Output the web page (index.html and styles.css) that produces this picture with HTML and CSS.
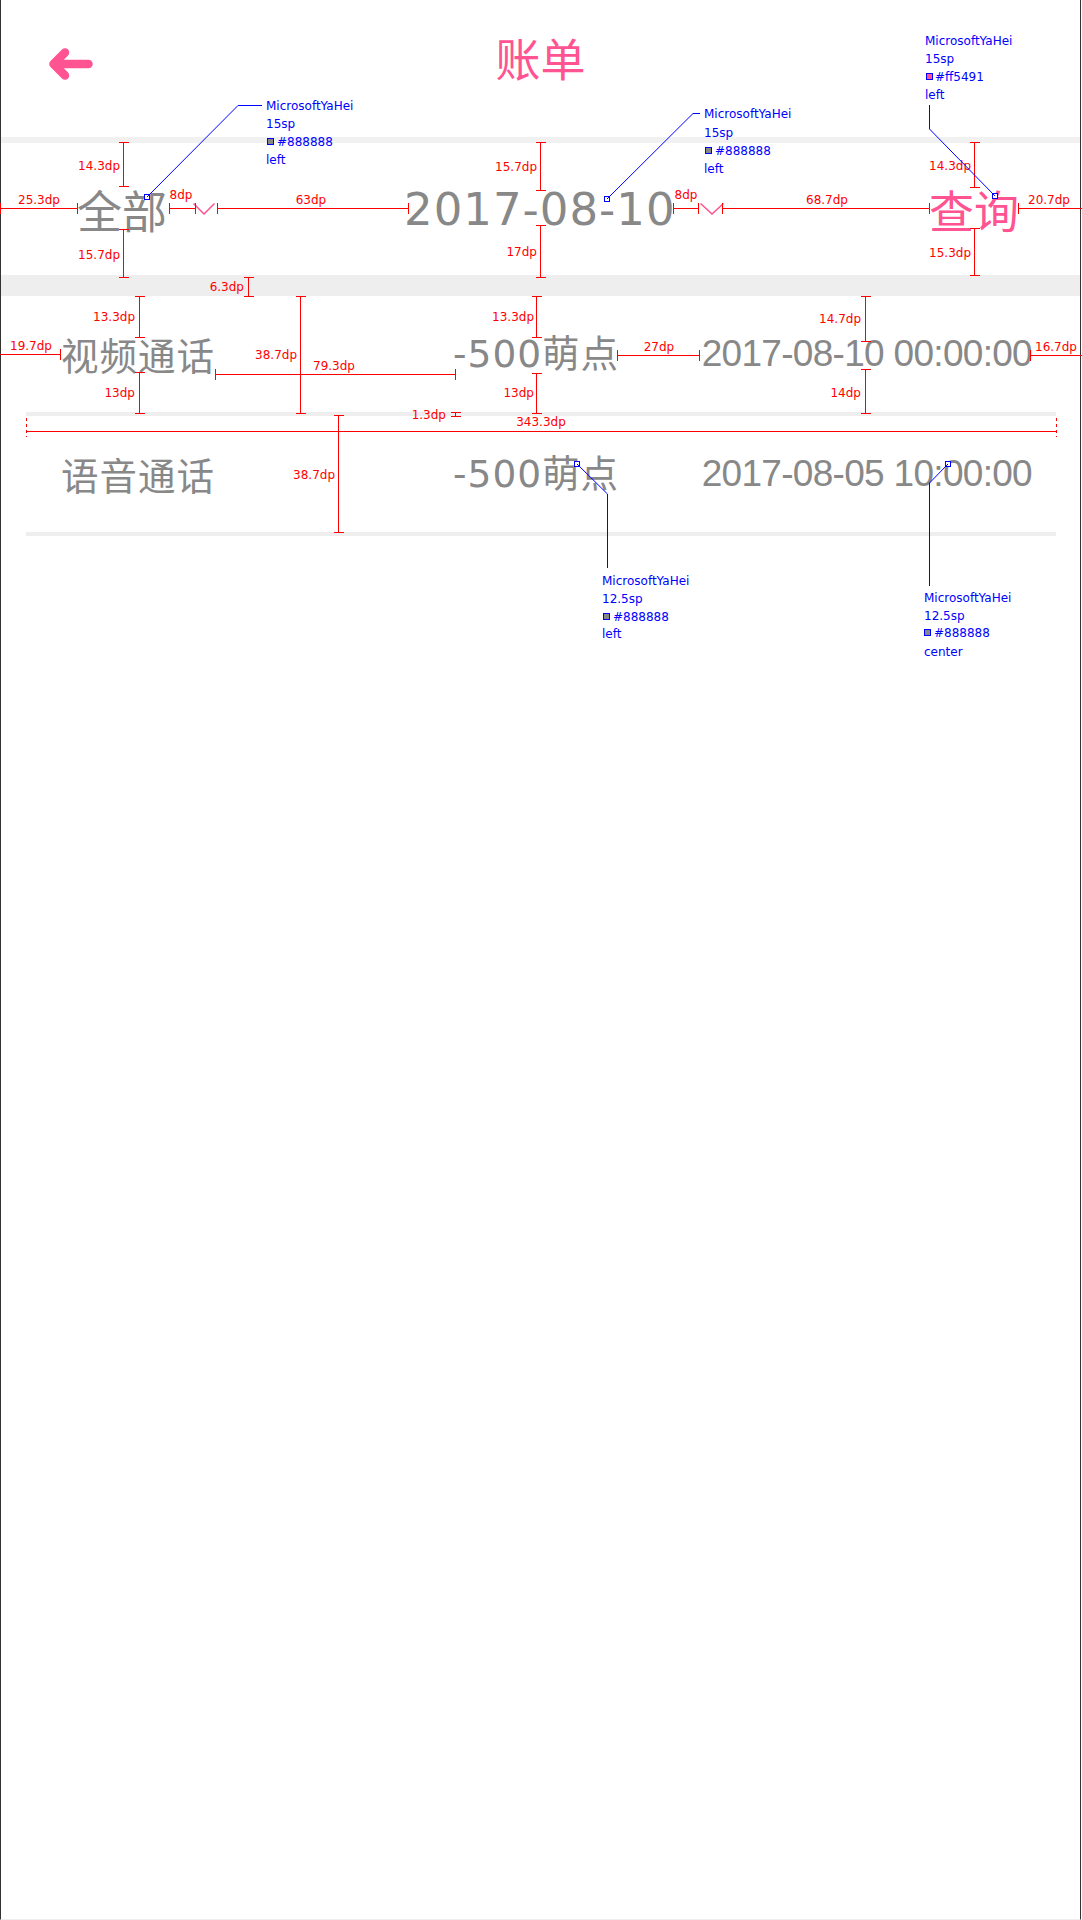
FILE: index.html
```html
<!DOCTYPE html>
<html lang="zh-CN">
<head>
<meta charset="utf-8">
<title>账单</title>
<link rel="stylesheet" href="styles.css">
</head>
<body>
<div class="page">
  <header class="topbar">
    <a class="back" href="#" aria-label="返回">
      <svg class="back-icon" width="44" height="33" viewBox="0 0 44 33"><path d="M39.5 16H5M16 4.5L4.5 16L16 27.5"/></svg>
    </a>
    <h1 class="title">账单</h1>
    <span class="spacer"></span>
  </header>
  <div class="strip"></div>
  <div class="filter">
    <span class="sel">全部</span>
    <svg class="caret caret-a" width="22" height="12" viewBox="0 0 22 12"><path d="M0.5 0.5L11 11L21.5 0.5"/></svg>
    <span class="sel sel-date">2017-08-10</span>
    <svg class="caret caret-b" width="24" height="12" viewBox="0 0 24 12"><path d="M0.5 0.5L12 11L23.5 0.5"/></svg>
    <span class="query">查询</span>
  </div>
  <div class="band"></div>
  <ul class="list">
    <li class="item"><span class="type">视频通话</span><span class="amt">-500萌点</span><span class="time">2017-08-10 00:00:00</span></li>
    <li class="divider"></li>
    <li class="item"><span class="type">语音通话</span><span class="amt">-500萌点</span><span class="time">2017-08-05 10:00:00</span></li>
    <li class="divider"></li>
  </ul>

  <svg class="notes" width="1082" height="1920" viewBox="0 0 1082 1920">
    <g class="dim">
      <path d="M123.5 142.5V186.5M118.5 142.5H128.5M118.5 186.5H128.5"/>
      <path d="M123.5 229.5V277.5M118.5 229.5H128.5M118.5 277.5H128.5"/>
      <path d="M248.5 277.5V296.5M243.5 277.5H253.5M243.5 296.5H253.5"/>
      <path d="M540.5 142.5V190.5M535.5 142.5H545.5M535.5 190.5H545.5"/>
      <path d="M540.5 225.5V277.5M535.5 225.5H545.5M535.5 277.5H545.5"/>
      <path d="M974.5 142.5V187.5M969.5 142.5H979.5M969.5 187.5H979.5"/>
      <path d="M974.5 228.5V275.5M969.5 228.5H979.5M969.5 275.5H979.5"/>
      <path d="M139.5 296.5V337.5M134.5 296.5H144.5M134.5 337.5H144.5"/>
      <path d="M139.5 372.5V413.5M134.5 372.5H144.5M134.5 413.5H144.5"/>
      <path d="M300.5 296.5V413.5M295.5 296.5H305.5M295.5 413.5H305.5"/>
      <path d="M536.5 296.5V337.5M531.5 296.5H541.5M531.5 337.5H541.5"/>
      <path d="M536.5 373.5V413.5M531.5 373.5H541.5M531.5 413.5H541.5"/>
      <path d="M865.5 296.5V341.5M860.5 296.5H870.5M860.5 341.5H870.5"/>
      <path d="M865.5 369.5V413.5M860.5 369.5H870.5M860.5 413.5H870.5"/>
      <path d="M455.5 412.5V416.5M450.5 412.5H460.5M450.5 416.5H460.5"/>
      <path d="M338.5 415.5V532.5M333.5 415.5H343.5M333.5 532.5H343.5"/>

      <path d="M0 208.5H77M0.5 203V214M77.5 203V214"/>
      <path d="M169.5 208.5H195M169.5 203V214M195.5 203V214"/>
      <path d="M217.5 208.5H408.5M217.5 203V214M408.5 203V214"/>
      <path d="M673.5 208.5H698M673.5 203V214M698.5 203V214"/>
      <path d="M722.5 208.5H929M722.5 203V214M929.5 203V214"/>
      <path d="M1018.5 208.5H1082M1018.5 203V214"/>
      <path d="M0 354.5H61M60.5 349V360"/>
      <path d="M215.5 374.5H455M215.5 369V380M455.5 369V380"/>
      <path d="M617.5 355.5H699M617.5 350V361M699.5 350V361"/>
      <path d="M1030.5 355.5H1082M1030.5 350V361"/>
      <path d="M26.5 431.5H1056"/>
      <path class="dash" d="M26.5 418V437M1056.5 418V437"/>
    </g>
    <g class="dl end">
      <text x="120" y="166">14.3dp</text>
      <text x="120" y="255">15.7dp</text>
      <text x="244" y="287">6.3dp</text>
      <text x="537" y="167">15.7dp</text>
      <text x="537" y="252">17dp</text>
      <text x="971" y="166">14.3dp</text>
      <text x="971" y="253">15.3dp</text>
      <text x="135" y="317">13.3dp</text>
      <text x="135" y="393">13dp</text>
      <text x="297" y="355">38.7dp</text>
      <text x="534" y="317">13.3dp</text>
      <text x="534" y="393">13dp</text>
      <text x="861" y="319">14.7dp</text>
      <text x="861" y="393">14dp</text>
      <text x="446" y="415">1.3dp</text>
      <text x="335" y="475">38.7dp</text>
    </g>
    <g class="dl mid">
      <text x="39" y="200">25.3dp</text>
      <text x="181" y="195">8dp</text>
      <text x="311" y="200">63dp</text>
      <text x="686" y="195">8dp</text>
      <text x="827" y="200">68.7dp</text>
      <text x="1049" y="200">20.7dp</text>
      <text x="31" y="346">19.7dp</text>
      <text x="334" y="366">79.3dp</text>
      <text x="659" y="347">27dp</text>
      <text x="1056" y="347">16.7dp</text>
      <text x="541" y="422">343.3dp</text>
    </g>

    <g class="co">
      <rect x="144.5" y="194.5" width="5" height="5"/>
      <polyline points="147,197 238,105.5 262,105.5"/>
      <rect x="604.5" y="196.5" width="5" height="5"/>
      <polyline points="607,199 693,113.5 700,113.5"/>
      <rect x="992.5" y="193.5" width="5" height="5"/>
      <polyline points="995,196 929.5,129 929.5,105"/>
      <rect x="574.5" y="461.5" width="5" height="5"/>
      <polyline points="577,464 607.5,494 607.5,568"/>
      <rect x="945.5" y="461.5" width="5" height="5"/>
      <polyline points="948,464 929.5,483 929.5,586"/>
    </g>
    <g class="sw">
      <rect class="sw-gray" x="267.5" y="138.5" width="6" height="6"/>
      <rect class="sw-gray" x="705.5" y="147.5" width="6" height="6"/>
      <rect class="sw-pink" x="926.5" y="73.5" width="6" height="6"/>
      <rect class="sw-gray" x="603.5" y="613.5" width="6" height="6"/>
      <rect class="sw-gray" x="924.5" y="629.5" width="6" height="6"/>
    </g>
    <g class="ct">
      <text x="266" y="106">MicrosoftYaHei</text>
      <text x="266" y="124">15sp</text>
      <text x="277" y="142">#888888</text>
      <text x="266" y="160">left</text>

      <text x="704" y="114">MicrosoftYaHei</text>
      <text x="704" y="132.5">15sp</text>
      <text x="715" y="151">#888888</text>
      <text x="704" y="169">left</text>

      <text x="925" y="41">MicrosoftYaHei</text>
      <text x="925" y="59">15sp</text>
      <text x="935" y="77">#ff5491</text>
      <text x="925" y="95">left</text>

      <text x="602" y="581">MicrosoftYaHei</text>
      <text x="602" y="599">12.5sp</text>
      <text x="613" y="617">#888888</text>
      <text x="602" y="634">left</text>

      <text x="924" y="598">MicrosoftYaHei</text>
      <text x="924" y="616">12.5sp</text>
      <text x="934" y="633">#888888</text>
      <text x="924" y="652">center</text>
    </g>
  </svg>
</div>
</body>
</html>
```
FILE: styles.css
```css
* {
  box-sizing: border-box;
  margin: 0;
  padding: 0;
}

html,
body {
  background: #ffffff;
}

body {
  width: 1082px;
  height: 1920px;
  overflow: hidden;
}

.page {
  position: relative;
  width: 1081px;
  height: 1920px;
  border-left: 1px solid #333333;
  border-right: 1px solid #333333;
  border-bottom: 1px solid #eeeeee;
  font-family: "Noto Sans CJK SC", "Noto Sans", sans-serif;
  color: #888888;
}

/* header */
.topbar {
  height: 137px;
  display: grid;
  grid-template-columns: 1fr auto 1fr;
  align-items: start;
}

.back {
  display: block;
  width: 44px;
  height: 33px;
  margin: 48px 0 0 48px;
}

.back-icon {
  display: block;
}

.back-icon path {
  fill: none;
  stroke: #ff5491;
  stroke-width: 8.5;
  stroke-linecap: round;
  stroke-linejoin: round;
}

.title {
  margin-top: 35px;
  font-size: 45px;
  line-height: 45px;
  font-weight: 400;
  color: #ff5491;
}

.strip {
  height: 6px;
  background: #f1f1f1;
}

/* filter row */
.filter {
  height: 132px;
  display: flex;
  align-items: center;
  padding: 0 61px 0 76px;
}

.sel {
  font-size: 45px;
  line-height: 45px;
  color: #888888;
}

.sel-date {
  margin-left: 189px;
  font-family: "DejaVu Sans", "Noto Sans CJK SC", sans-serif;
  letter-spacing: 1px;
}

.caret {
  display: block;
  flex: none;
}

.caret path {
  fill: none;
  stroke: #ff5491;
  stroke-width: 1.5;
}

.caret-a {
  margin-left: 26px;
}

.caret-b {
  margin-left: 24px;
}

.query {
  margin-left: auto;
  font-size: 45px;
  line-height: 45px;
  color: #ff5491;
}

.band {
  height: 21px;
  background: #eeeeee;
}

/* list */
.list {
  list-style: none;
}

.item {
  height: 116px;
  display: flex;
  align-items: center;
  padding: 0 48px 0 60px;
  font-size: 37.5px;
  line-height: 40px;
}

.type {
  letter-spacing: 1px;
}

.amt {
  margin-left: 238px;
  font-family: "DejaVu Sans", "Noto Sans CJK SC", sans-serif;
  letter-spacing: 1px;
}

.time {
  margin-left: auto;
  font-family: "Liberation Sans", "Noto Sans CJK SC", sans-serif;
  font-size: 37px;
  letter-spacing: -0.7px;
}

.divider {
  height: 4px;
  margin: 0 24px 0 25px;
  background: #eeeeee;
}

/* annotation layer */
.notes {
  position: absolute;
  top: 0;
  left: -1px;
  pointer-events: none;
}

.dim path {
  fill: none;
  stroke: #ff0000;
  stroke-width: 1;
  shape-rendering: crispEdges;
}

.dim .dash {
  stroke-dasharray: 3 3;
}

.notes text {
  font-family: "DejaVu Sans", sans-serif;
  font-size: 12px;
  dominant-baseline: central;
}

.dl text {
  fill: #ff0000;
}

.dl.end text {
  text-anchor: end;
}

.dl.mid text {
  text-anchor: middle;
}

.co rect,
.co polyline {
  fill: none;
  stroke: #0000ff;
  stroke-width: 1;
}

.co rect {
  fill: #ffffff;
  shape-rendering: crispEdges;
}

.sw rect {
  stroke: #0000ff;
  stroke-width: 1;
  shape-rendering: crispEdges;
}

.sw-gray {
  fill: #888888;
}

.sw-pink {
  fill: #ff5491;
}

.ct text {
  fill: #0000ff;
}
```
